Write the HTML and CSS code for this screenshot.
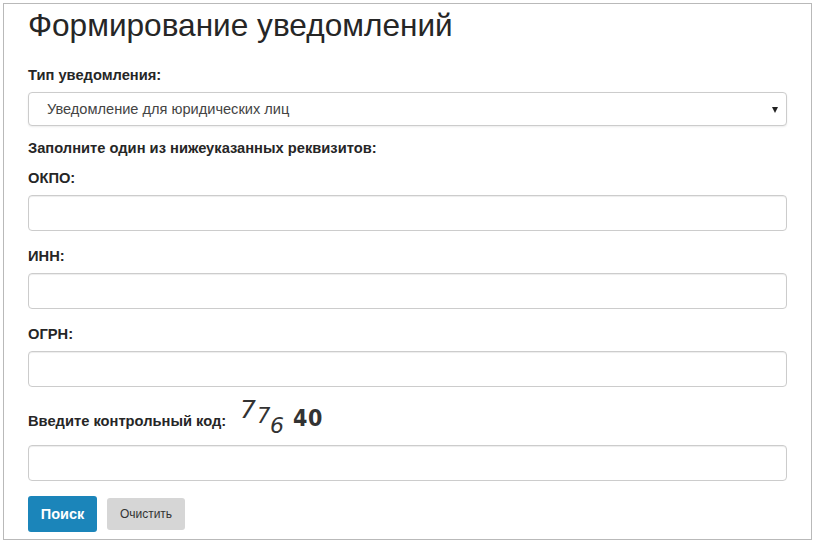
FILE: index.html
```html
<!DOCTYPE html>
<html lang="ru">
<head>
<meta charset="utf-8">
<title>Формирование уведомлений</title>
<link rel="stylesheet" href="styles.css">
</head>
<body>
<div class="frame">
  <h1 class="title">Формирование уведомлений</h1>
  <form class="form">
    <label class="label label-first">Тип уведомления:</label>
    <div class="select-wrap">
      <select class="select">
        <option>Уведомление для юридических лиц</option>
      </select>
    </div>
    <div class="label label-section">Заполните один из нижеуказанных реквизитов:</div>
    <label class="label label-sub">ОКПО:</label>
    <input class="input" type="text">
    <label class="label label-next">ИНН:</label>
    <input class="input" type="text">
    <label class="label label-next">ОГРН:</label>
    <input class="input" type="text">
    <div class="captcha-row">
      <label class="label captcha-label">Введите контрольный код:</label>
      <svg class="captcha" width="96" height="48" viewBox="0 -8 96 48">
        <text x="2" y="18" class="c1">7</text>
        <text x="19" y="23" class="c2">7</text>
        <text x="32" y="33" class="c3">6</text>
        <text x="55" y="26" class="c4">40</text>
      </svg>
    </div>
    <input class="input input-code" type="text">
    <div class="buttons">
      <button type="button" class="btn btn-primary">Поиск</button>
      <button type="button" class="btn btn-clear">Очистить</button>
    </div>
  </form>
</div>
</body>
</html>
```
FILE: styles.css
```css
html, body {
  margin: 0;
  padding: 0;
  background: #ffffff;
}
body {
  padding: 3px 0 0 3px;
  font-family: "Liberation Sans", Arial, sans-serif;
  color: #333333;
}
.frame {
  box-sizing: border-box;
  width: 809px;
  height: 537px;
  border: 1px solid #b9b9b9;
  padding: 3px 24px 0 24px;
  background: #ffffff;
}
.title {
  margin: 0;
  font-size: 31.6px;
  line-height: 36px;
  font-weight: normal;
  color: #262626;
}
.form {
  display: flex;
  flex-direction: column;
}
.label {
  display: block;
  font-size: 14.7px;
  line-height: 20px;
  font-weight: bold;
  color: #262626;
}
.label-first { margin-top: 22px; }
.select-wrap {
  position: relative;
  margin-top: 7px;
}
.select-wrap::after {
  content: "";
  position: absolute;
  right: 9px;
  top: 15px;
  border-left: 3.5px solid transparent;
  border-right: 3.5px solid transparent;
  border-top: 6px solid #222;
}
.select {
  -webkit-appearance: none;
  appearance: none;
  box-sizing: border-box;
  width: 100%;
  height: 34px;
  border: 1px solid #cccccc;
  border-radius: 4px;
  background: #ffffff;
  padding: 0 30px 0 18px;
  font-family: "Liberation Sans", Arial, sans-serif;
  font-size: 14.6px;
  color: #444444;
  box-shadow: 0 1px 2px rgba(0,0,0,0.08);
}
.label-section { margin-top: 12px; }
.label-sub { margin-top: 10px; }
.label-next { margin-top: 15px; }
.input {
  box-sizing: border-box;
  width: 100%;
  height: 36px;
  margin-top: 7px;
  border: 1px solid #cccccc;
  border-radius: 4px;
  background: #ffffff;
  box-shadow: inset 0 1px 1px rgba(0,0,0,0.075);
  font-size: 14px;
  padding: 0 12px;
}
.captcha-row {
  display: flex;
  align-items: flex-start;
  gap: 12px;
  margin-top: 13px;
  height: 36px;
}
.captcha-label {
  margin-top: 11px;
}
.captcha {
  display: block;
  flex: none;
  margin-top: -8px;
  margin-bottom: -4px;
  overflow: visible;
}
.captcha text {
  fill: #333333;
}
.c1 {
  font-family: "DejaVu Sans", sans-serif;
  font-size: 25px;
  font-weight: 200;
  font-style: italic;
}
.c2 {
  font-family: "DejaVu Sans", sans-serif;
  font-size: 21px;
  font-weight: 200;
  font-style: italic;
}
.c3 {
  font-family: "DejaVu Sans", sans-serif;
  font-size: 22px;
  font-weight: 200;
  font-style: italic;
}
.c4 {
  font-family: "DejaVu Sans Condensed", "DejaVu Sans", sans-serif;
  font-size: 23px;
  font-weight: bold;
  letter-spacing: 0.5px;
  fill: #2a2a2a;
}
.input-code { margin-top: 9px; }
.buttons {
  display: flex;
  align-items: center;
  gap: 10px;
  margin-top: 15px;
}
.btn {
  border: none;
  border-radius: 3px;
  font-family: "Liberation Sans", Arial, sans-serif;
  cursor: pointer;
}
.btn-primary {
  width: 69px;
  height: 36px;
  background: #1b85ba;
  color: #ffffff;
  font-size: 14.5px;
  font-weight: bold;
}
.btn-clear {
  width: 78px;
  height: 32px;
  background: #d6d6d6;
  color: #333333;
  font-size: 12px;
}
```
